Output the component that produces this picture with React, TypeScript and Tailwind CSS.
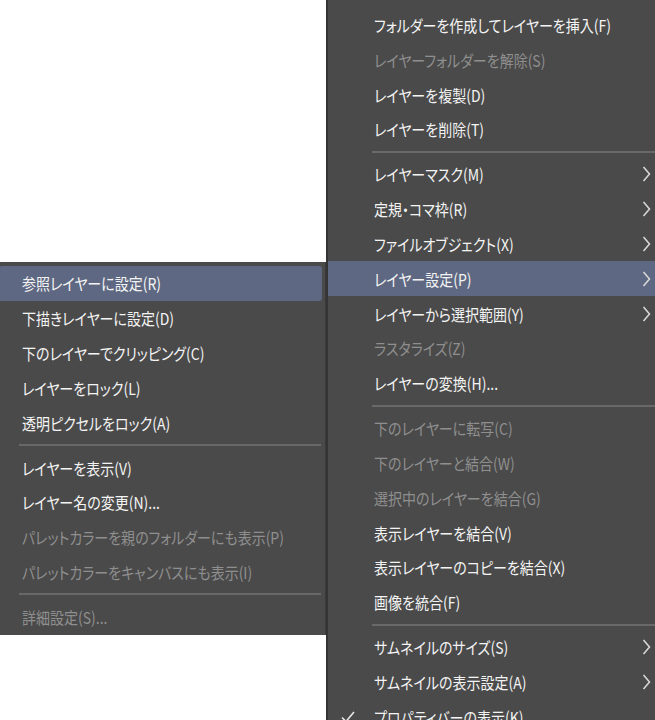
import type React from "react"

type Item =
  | { kind: "sep" }
  | { kind: "row"; label: string; disabled?: boolean; active?: boolean; arrow?: boolean; checked?: boolean }

const mainItems: Item[] = [
  { kind: "row", label: "新規レイヤーフォルダー(G)" },
  { kind: "row", label: "フォルダーを作成してレイヤーを挿入(F)" },
  { kind: "row", label: "レイヤーフォルダーを解除(S)", disabled: true },
  { kind: "row", label: "レイヤーを複製(D)" },
  { kind: "row", label: "レイヤーを削除(T)" },
  { kind: "sep" },
  { kind: "row", label: "レイヤーマスク(M)", arrow: true },
  { kind: "row", label: "定規・コマ枠(R)", arrow: true },
  { kind: "row", label: "ファイルオブジェクト(X)", arrow: true },
  { kind: "row", label: "レイヤー設定(P)", arrow: true, active: true },
  { kind: "row", label: "レイヤーから選択範囲(Y)", arrow: true },
  { kind: "row", label: "ラスタライズ(Z)", disabled: true },
  { kind: "row", label: "レイヤーの変換(H)..." },
  { kind: "sep" },
  { kind: "row", label: "下のレイヤーに転写(C)", disabled: true },
  { kind: "row", label: "下のレイヤーと結合(W)", disabled: true },
  { kind: "row", label: "選択中のレイヤーを結合(G)", disabled: true },
  { kind: "row", label: "表示レイヤーを結合(V)" },
  { kind: "row", label: "表示レイヤーのコピーを結合(X)" },
  { kind: "row", label: "画像を統合(F)" },
  { kind: "sep" },
  { kind: "row", label: "サムネイルのサイズ(S)", arrow: true },
  { kind: "row", label: "サムネイルの表示設定(A)", arrow: true },
  { kind: "row", label: "プロパティバーの表示(K)", checked: true },
]

const subItems: Item[] = [
  { kind: "row", label: "参照レイヤーに設定(R)", active: true },
  { kind: "row", label: "下描きレイヤーに設定(D)" },
  { kind: "row", label: "下のレイヤーでクリッピング(C)" },
  { kind: "row", label: "レイヤーをロック(L)" },
  { kind: "row", label: "透明ピクセルをロック(A)" },
  { kind: "sep" },
  { kind: "row", label: "レイヤーを表示(V)" },
  { kind: "row", label: "レイヤー名の変更(N)..." },
  { kind: "row", label: "パレットカラーを親のフォルダーにも表示(P)", disabled: true },
  { kind: "row", label: "パレットカラーをキャンバスにも表示(I)", disabled: true },
  { kind: "sep" },
  { kind: "row", label: "詳細設定(S)...", disabled: true },
]

function Chevron() {
  return (
    <svg width="9" height="16" viewBox="0 0 9 16" fill="none" stroke="#d6d6d6" strokeWidth="1.6">
      <polyline points="1.5,1 7.5,8 1.5,15" />
    </svg>
  )
}

function Check() {
  return (
    <svg width="14" height="12" viewBox="0 0 14 12" fill="none" stroke="#e6e6e6" strokeWidth="1.6">
      <polyline points="1,6.5 5,10.5 13,1" />
    </svg>
  )
}

function MenuList({ items, pad, sub }: { items: Item[]; pad: string; sub?: boolean }) {
  return (
    <>
      {items.map((item, i) => {
        if (item.kind === "sep") {
          return (
            <div key={i} className={`h-[10.2px] flex items-center ${sub ? "pl-[20px] pr-[1px]" : "pl-[44px]"}`}>
              <div className="h-[2px] flex-1 bg-[#696969]" />
            </div>
          )
        }
        return (
          <div
            key={i}
            className={`h-[34.8px] flex items-center ${item.active ? "bg-[#5e6882]" : ""} ${
              item.active && sub ? "rounded-[3px]" : ""
            }`}
          >
            <div className={`${pad} shrink-0 flex items-center pl-[13px]`}>{item.checked ? <Check /> : null}</div>
            <span
              className={`flex-1 whitespace-nowrap text-[14px] leading-none scale-y-[1.17] ${
                item.disabled ? "text-[#8f8f8f]" : "text-[#f4f4f4]"
              }`}
            >
              {item.label}
            </span>
            {item.arrow ? (
              <div className="mr-[15px]">
                <Chevron />
              </div>
            ) : null}
          </div>
        )
      })}
    </>
  )
}

export default function App() {
  return (
    <div className="relative w-[655px] h-[720px] overflow-hidden bg-white [font-family:'Noto_Sans_CJK_JP',sans-serif] [font-feature-settings:'palt']">
      {/* main layer menu */}
      <div className="absolute left-[326px] top-[-27.2px] w-[340px] bg-[#4a4a4a] border-l-2 border-[#343434]">
        <MenuList items={mainItems} pad="w-[46px]" />
      </div>

      {/* layer settings submenu */}
      <div className="absolute left-[-4px] top-[262px] w-[330px] bg-[#4a4a4a] border-r border-[#3a3a3a] pt-[4px] pl-[3px] pr-[3px] pb-[1px]">
        <MenuList items={subItems} pad="w-[23px]" sub />
      </div>
    </div>
  )
}
